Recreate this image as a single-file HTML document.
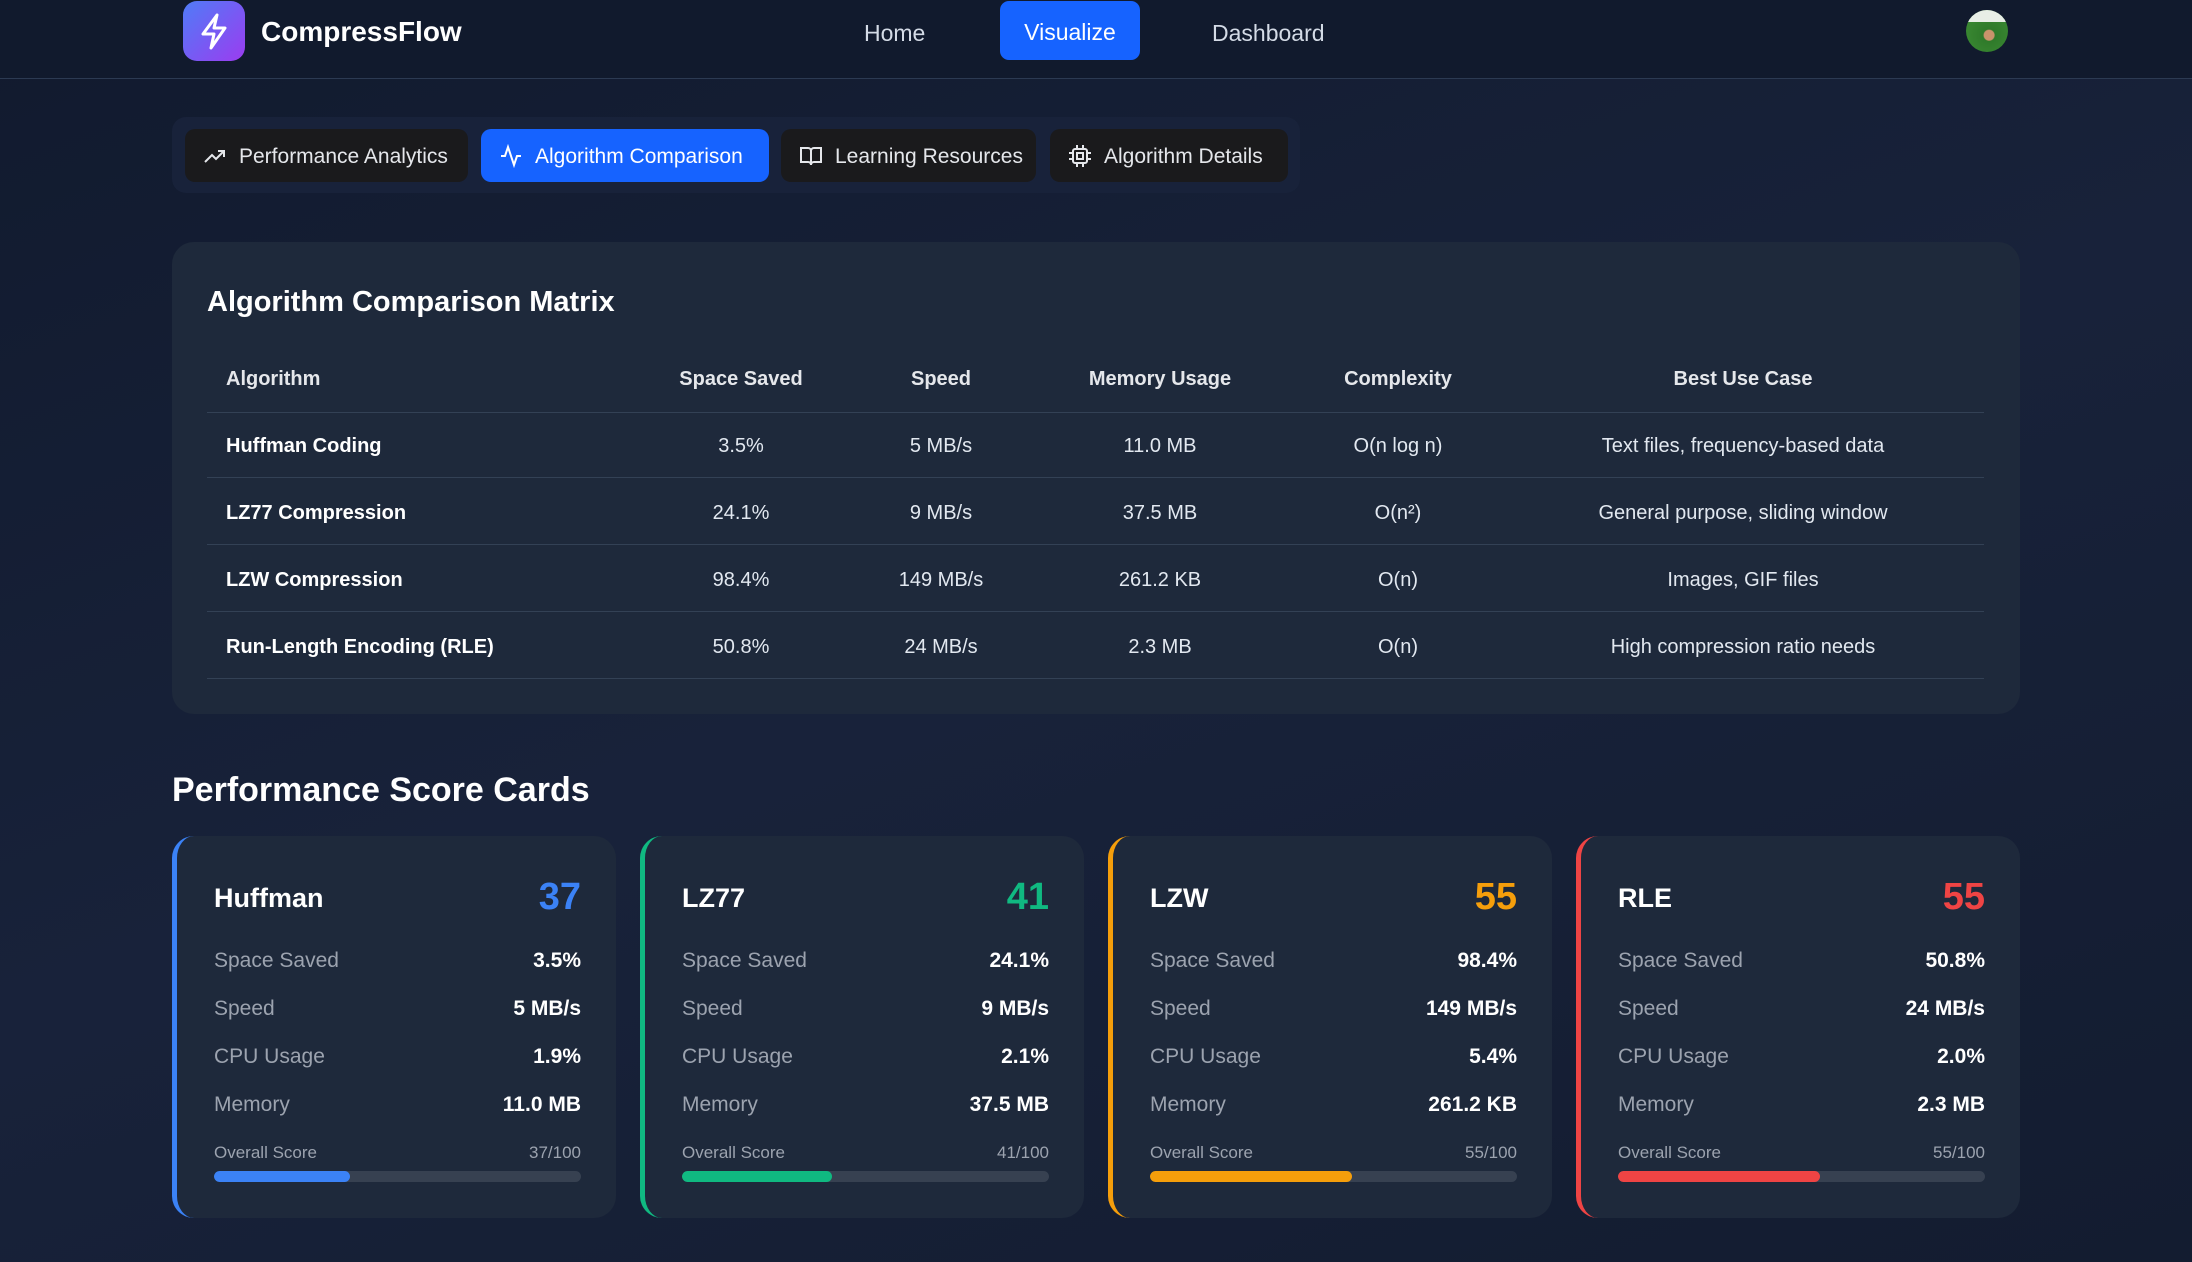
<!DOCTYPE html>
<html><head><meta charset="utf-8"><style>
*{box-sizing:border-box;margin:0;padding:0}
body{width:2192px;height:1262px;overflow:hidden;font-family:"Liberation Sans",sans-serif;background:linear-gradient(160deg,#111a2e 0%,#18223a 50%,#131c30 100%);color:#fff;position:relative}
.nav{position:absolute;left:0;top:0;width:2192px;height:79px;border-bottom:1px solid #2c3a52;background:#111a2d}
.logo{position:absolute;left:183px;top:1px;width:62px;height:60px;border-radius:14px;background:linear-gradient(135deg,#4f7cf7,#9b3cf0)}
.brand{position:absolute;left:261px;top:16px;font-size:28px;font-weight:bold}
.nl{position:absolute;top:20px;font-size:23px;color:#d4dbe6}
.vis{position:absolute;left:1000px;top:1px;width:140px;height:59px;border-radius:9px;background:#1663ff;color:#fff;font-size:23px;text-align:center;line-height:63px}
.av{position:absolute;left:1966px;top:10px;width:42px;height:42px;border-radius:50%;background:radial-gradient(circle at 55% 60%,#c9936b 0 5px,#2f7a2a 6px,#3f8f36 100%);overflow:hidden}
.av:before{content:"";position:absolute;left:0;top:0;width:42px;height:12px;background:#e8eee6}
.tabs{position:absolute;left:172px;top:117px;width:1128px;height:76px;border-radius:14px;background:#18223a}
.tb{position:absolute;top:12px;height:53px;border-radius:10px;background:#1a1a1c;color:#e5e7eb;font-size:21px;line-height:55px;padding-left:54px}
.tb svg{position:absolute;left:18px;top:15px}
.tb.on{background:#1663ff;color:#fff}
.card{position:absolute;left:172px;top:242px;width:1848px;height:472px;border-radius:22px;background:#1e293b}
.card h2{position:absolute;left:35px;top:44px;font-size:29px;font-weight:600}
.t{position:absolute;left:207px;top:346px;width:1777px}
.row{position:absolute;left:0;width:1777px;height:67px;border-bottom:1px solid #334155;font-size:20px;color:#e2e8f0}
.row span{position:absolute;top:24px;transform:translateX(-50%);white-space:nowrap}
.row span.a{transform:none;left:19px;font-weight:bold;color:#fff}
.row.h span{font-weight:bold;color:#e5e7eb;top:22px}
.sh{position:absolute;left:172px;top:771px;font-size:34px;font-weight:600}
.sc{position:absolute;top:836px;width:444px;height:382px;border-radius:22px;background:#1e293b;border-left:5px solid}
.sc .n{position:absolute;left:37px;top:47px;font-size:27px;font-weight:bold}
.sc .s{position:absolute;right:35px;top:40px;font-size:38px;font-weight:bold}
.sc .r{position:absolute;left:37px;right:35px;font-size:21px;color:#9ca3af}
.sc .r b{position:absolute;right:0;top:0;color:#fff}
.sc .o{position:absolute;left:37px;right:35px;top:307px;font-size:17px;color:#9ca3af}
.sc .o i{position:absolute;right:0;font-style:normal}
.sc .bar{position:absolute;left:37px;right:35px;top:335px;height:11px;border-radius:6px;background:#374151;overflow:hidden}
.sc .bar div{height:100%;border-radius:6px}
</style></head><body>
<div class="nav">
<div class="logo"><svg width="62" height="60" viewBox="0 0 62 60"><path d="M34 14 L20 33 H31 L28 47 L42 27 H31 Z" fill="none" stroke="#fff" stroke-width="3" stroke-linejoin="round"/></svg></div>
<div class="brand">CompressFlow</div>
<div class="nl" style="left:864px">Home</div>
<div class="vis">Visualize</div>
<div class="nl" style="left:1212px">Dashboard</div>
<div class="av"></div>
</div>
<div class="tabs">
<div class="tb" style="left:13px;width:283px"><svg width="24" height="24" viewBox="0 0 24 24" fill="none" stroke="#e5e7eb" stroke-width="2"><path d="M2 18 L9 11 L13 15 L21 7 M15 7 H21 V13"/></svg>Performance Analytics</div>
<div class="tb on" style="left:309px;width:288px"><svg width="24" height="24" viewBox="0 0 24 24" fill="none" stroke="#fff" stroke-width="2"><path d="M2 12 H6 L9 3 L15 21 L18 12 H22"/></svg>Algorithm Comparison</div>
<div class="tb" style="left:609px;width:255px"><svg width="24" height="24" viewBox="0 0 24 24" fill="none" stroke="#e5e7eb" stroke-width="2"><path d="M2 4 H9 A3 3 0 0 1 12 7 V21 A3 3 0 0 0 9 18 H2 Z M22 4 H15 A3 3 0 0 0 12 7 V21 A3 3 0 0 1 15 18 H22 Z"/></svg>Learning Resources</div>
<div class="tb" style="left:878px;width:238px"><svg width="24" height="24" viewBox="0 0 24 24" fill="none" stroke="#e5e7eb" stroke-width="2"><rect x="5" y="5" width="14" height="14" rx="2"/><rect x="9" y="9" width="6" height="6"/><path d="M9 1v4M15 1v4M9 19v4M15 19v4M1 9h4M1 15h4M19 9h4M19 15h4"/></svg>Algorithm Details</div>
</div>
<div class="card"><h2>Algorithm Comparison Matrix</h2></div>
<div class="t">
<div class="row h" style="top:0"><span class="a">Algorithm</span><span style="left:534px">Space Saved</span><span style="left:734px">Speed</span><span style="left:953px">Memory Usage</span><span style="left:1191px">Complexity</span><span style="left:1536px">Best Use Case</span></div>
<div class="row" style="top:65px"><span class="a">Huffman Coding</span><span style="left:534px">3.5%</span><span style="left:734px">5 MB/s</span><span style="left:953px">11.0 MB</span><span style="left:1191px">O(n log n)</span><span style="left:1536px">Text files, frequency-based data</span></div>
<div class="row" style="top:132px"><span class="a">LZ77 Compression</span><span style="left:534px">24.1%</span><span style="left:734px">9 MB/s</span><span style="left:953px">37.5 MB</span><span style="left:1191px">O(n²)</span><span style="left:1536px">General purpose, sliding window</span></div>
<div class="row" style="top:199px"><span class="a">LZW Compression</span><span style="left:534px">98.4%</span><span style="left:734px">149 MB/s</span><span style="left:953px">261.2 KB</span><span style="left:1191px">O(n)</span><span style="left:1536px">Images, GIF files</span></div>
<div class="row" style="top:266px"><span class="a">Run-Length Encoding (RLE)</span><span style="left:534px">50.8%</span><span style="left:734px">24 MB/s</span><span style="left:953px">2.3 MB</span><span style="left:1191px">O(n)</span><span style="left:1536px">High compression ratio needs</span></div>
</div>
<div class="sh">Performance Score Cards</div>

<div class="sc" style="left:172px;border-color:#3b82f6"><div class="n">Huffman</div><div class="s" style="color:#3b82f6">37</div>
<div class="r" style="top:113px">Space Saved<b>3.5%</b></div><div class="r" style="top:161px">Speed<b>5 MB/s</b></div><div class="r" style="top:209px">CPU Usage<b>1.9%</b></div><div class="r" style="top:257px">Memory<b>11.0 MB</b></div>
<div class="o">Overall Score<i>37/100</i></div><div class="bar"><div style="width:37%;background:#3b82f6"></div></div></div>

<div class="sc" style="left:640px;border-color:#10b981"><div class="n">LZ77</div><div class="s" style="color:#10b981">41</div>
<div class="r" style="top:113px">Space Saved<b>24.1%</b></div><div class="r" style="top:161px">Speed<b>9 MB/s</b></div><div class="r" style="top:209px">CPU Usage<b>2.1%</b></div><div class="r" style="top:257px">Memory<b>37.5 MB</b></div>
<div class="o">Overall Score<i>41/100</i></div><div class="bar"><div style="width:41%;background:#10b981"></div></div></div>

<div class="sc" style="left:1108px;border-color:#f59e0b"><div class="n">LZW</div><div class="s" style="color:#f59e0b">55</div>
<div class="r" style="top:113px">Space Saved<b>98.4%</b></div><div class="r" style="top:161px">Speed<b>149 MB/s</b></div><div class="r" style="top:209px">CPU Usage<b>5.4%</b></div><div class="r" style="top:257px">Memory<b>261.2 KB</b></div>
<div class="o">Overall Score<i>55/100</i></div><div class="bar"><div style="width:55%;background:#f59e0b"></div></div></div>

<div class="sc" style="left:1576px;border-color:#ef4444"><div class="n">RLE</div><div class="s" style="color:#ef4444">55</div>
<div class="r" style="top:113px">Space Saved<b>50.8%</b></div><div class="r" style="top:161px">Speed<b>24 MB/s</b></div><div class="r" style="top:209px">CPU Usage<b>2.0%</b></div><div class="r" style="top:257px">Memory<b>2.3 MB</b></div>
<div class="o">Overall Score<i>55/100</i></div><div class="bar"><div style="width:55%;background:#ef4444"></div></div></div>
</body></html>
